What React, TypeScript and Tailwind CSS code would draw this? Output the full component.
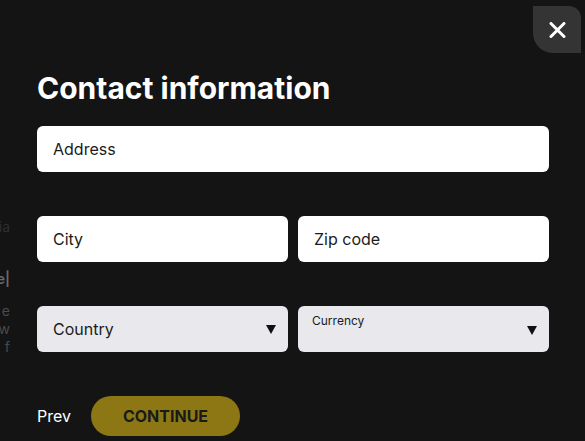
import React from 'react';

const font = { fontFamily: 'Inter, "Liberation Sans", sans-serif' };

function Arrow() {
  return (
    <svg width="10" height="9" viewBox="0 0 10 9" className="shrink-0">
      <path d="M0 0 H10 L5 9 Z" fill="#111" />
    </svg>
  );
}

function TextField({ label, className = '' }: { label: string; className?: string }) {
  return (
    <div className={`flex h-[46px] items-center rounded-[6px] bg-white pl-4 text-[16px] text-[#1b1b1b] ${className}`}>
      {label}
    </div>
  );
}

export default function App() {
  return (
    <div className="relative flex h-[441px] w-[585px] overflow-hidden bg-[#141414]" style={font}>
      {/* page behind the modal, barely visible on the left */}
      <div className="flex w-[10px] shrink-0 flex-col items-end overflow-hidden pt-[218px] text-[14px] leading-[18px] whitespace-nowrap">
        <span className="text-[#2e2e2e]">ia</span>
        <span className="mt-[34px] font-semibold text-[#6a6a6a]">e|</span>
        <span className="mt-[14px] text-[#4a4a4a]">e</span>
        <span className="text-[#4a4a4a]">w</span>
        <span className="text-[#4a4a4a]">f</span>
      </div>

      <div className="ml-[27px] flex w-[512px] flex-col pt-[70px]">
        <h1 className="text-[30px] leading-[36px] font-bold text-white">Contact information</h1>

        <TextField label="Address" className="mt-[20px]" />

        <div className="mt-[44px] grid grid-cols-2 gap-[10px]">
          <TextField label="City" />
          <TextField label="Zip code" />
        </div>

        <div className="mt-[44px] grid grid-cols-2 gap-[10px]">
          <div className="flex h-[46px] items-center justify-between rounded-[6px] bg-[#e9e8ed] pr-3 pl-4 text-[16px] text-[#1b1b1b]">
            Country
            <Arrow />
          </div>
          <div className="flex h-[46px] justify-between rounded-[6px] bg-[#e9e8ed] pr-3 pl-[14px]">
            <span className="pt-[7px] text-[12px] leading-[16px] text-[#1b1b1b]">Currency</span>
            <div className="flex items-center pt-[2px]">
              <Arrow />
            </div>
          </div>
        </div>

        <div className="mt-[44px] flex items-center gap-5">
          <span className="text-[16px] text-white">Prev</span>
          <button className="h-[40px] w-[149px] rounded-full bg-[#8c7714] text-[16px] font-bold text-[#1a1a1a]">
            CONTINUE
          </button>
        </div>
      </div>

      <button className="absolute top-[6px] right-[4px] flex h-[47px] w-[48px] items-center justify-center rounded-tr-[12px] rounded-bl-[20px] bg-[#343434]">
        <svg width="17" height="16" viewBox="0 0 17 16">
          <path d="M2 1.5 L15 14.5 M15 1.5 L2 14.5" stroke="#fff" strokeWidth="3" strokeLinecap="round" />
        </svg>
      </button>
    </div>
  );
}
